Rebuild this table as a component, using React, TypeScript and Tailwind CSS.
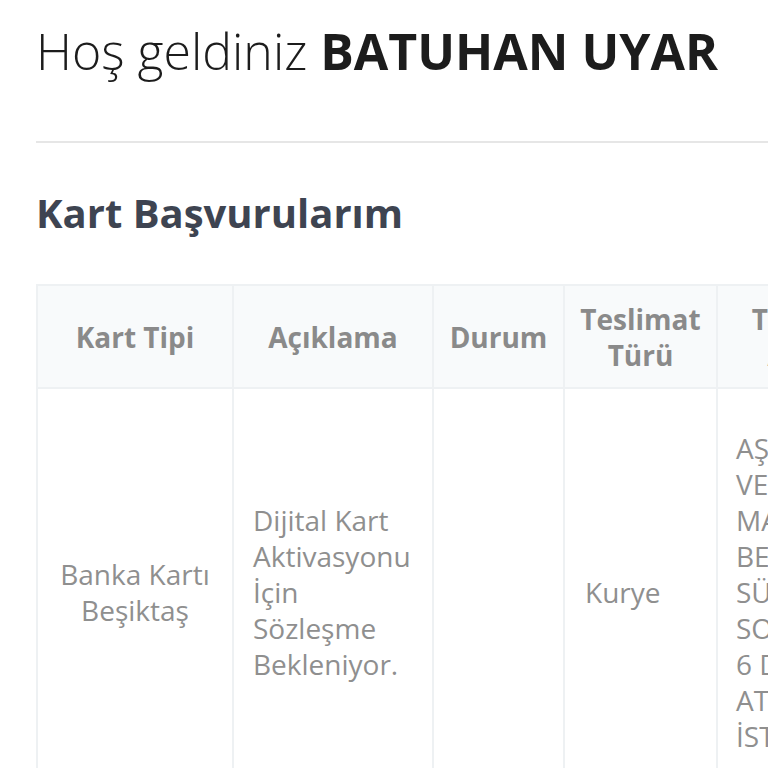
import React from "react";

const font = { fontFamily: '"Open Sans", "Noto Sans", sans-serif' };

export default function App() {
  const addr = ["AŞAĞI", "VEZİR", "MAHALLESİ", "BEŞİKTAŞ", "SÜMER", "SOKAK", "6 DAİRE", "ATAKÖY", "İSTANBUL"];
  return (
    <div className="w-[768px] h-[768px] overflow-hidden bg-white" style={font}>
      <div className="pl-[36px] w-[1000px]">
        <h1 className="mt-[26px] text-[50px] leading-[50px] text-[#1c1c1c] font-light whitespace-nowrap">
          Hoş geldiniz <span className="font-bold">BATUHAN UYAR</span>
        </h1>
        <div className="mt-[65px] h-[2px] bg-[#e6e6e6]" />
        <h2 className="mt-[50px] text-[40px] leading-[40px] font-bold text-[#3e4451]">Kart Başvurularım</h2>
        <div className="mt-[51px] grid grid-cols-[196px_200px_131px_153px_190px] border-l-2 border-t-2 border-[#eef1f3] w-max">
          {[
            ["Kart Tipi"],
            ["Açıklama"],
            ["Durum"],
            ["Teslimat", "Türü"],
            ["Teslimat", "Adresi"],
          ].map((lines, i) => (
            <div
              key={i}
              className="h-[103px] bg-[#f8fafb] border-r-2 border-b-2 border-[#eef1f3] flex items-center justify-center text-center text-[28px] leading-[36px] font-bold text-[#8a8a8a] px-[12px]"
            >
              <div>
                {lines.map((l, j) => (
                  <div key={j}>{l}</div>
                ))}
              </div>
            </div>
          ))}
          <div className="h-[408px] border-r-2 border-b-2 border-[#eef1f3] flex items-center justify-center text-center text-[28px] leading-[36px] text-[#8f8f8f] px-[16px]">
            <div>
              Banka Kartı
              <br />
              Beşiktaş
            </div>
          </div>
          <div className="h-[408px] border-r-2 border-b-2 border-[#eef1f3] flex items-center text-left text-[28px] leading-[36px] text-[#8f8f8f] pl-[19px] pr-[16px]">
            <div>Dijital Kart Aktivasyonu İçin Sözleşme Bekleniyor.</div>
          </div>
          <div className="h-[408px] border-r-2 border-b-2 border-[#eef1f3]" />
          <div className="h-[408px] border-r-2 border-b-2 border-[#eef1f3] flex items-center text-left text-[28px] leading-[36px] text-[#8f8f8f] pl-[20px] pr-[16px]">
            <div>Kurye</div>
          </div>
          <div className="h-[408px] border-r-2 border-b-2 border-[#eef1f3] flex items-center text-left text-[28px] leading-[36px] text-[#8f8f8f] pl-[18px] pr-[16px]">
            <div>
              {addr.map((l, j) => (
                <div key={j}>{l}</div>
              ))}
            </div>
          </div>
        </div>
      </div>
    </div>
  );
}
